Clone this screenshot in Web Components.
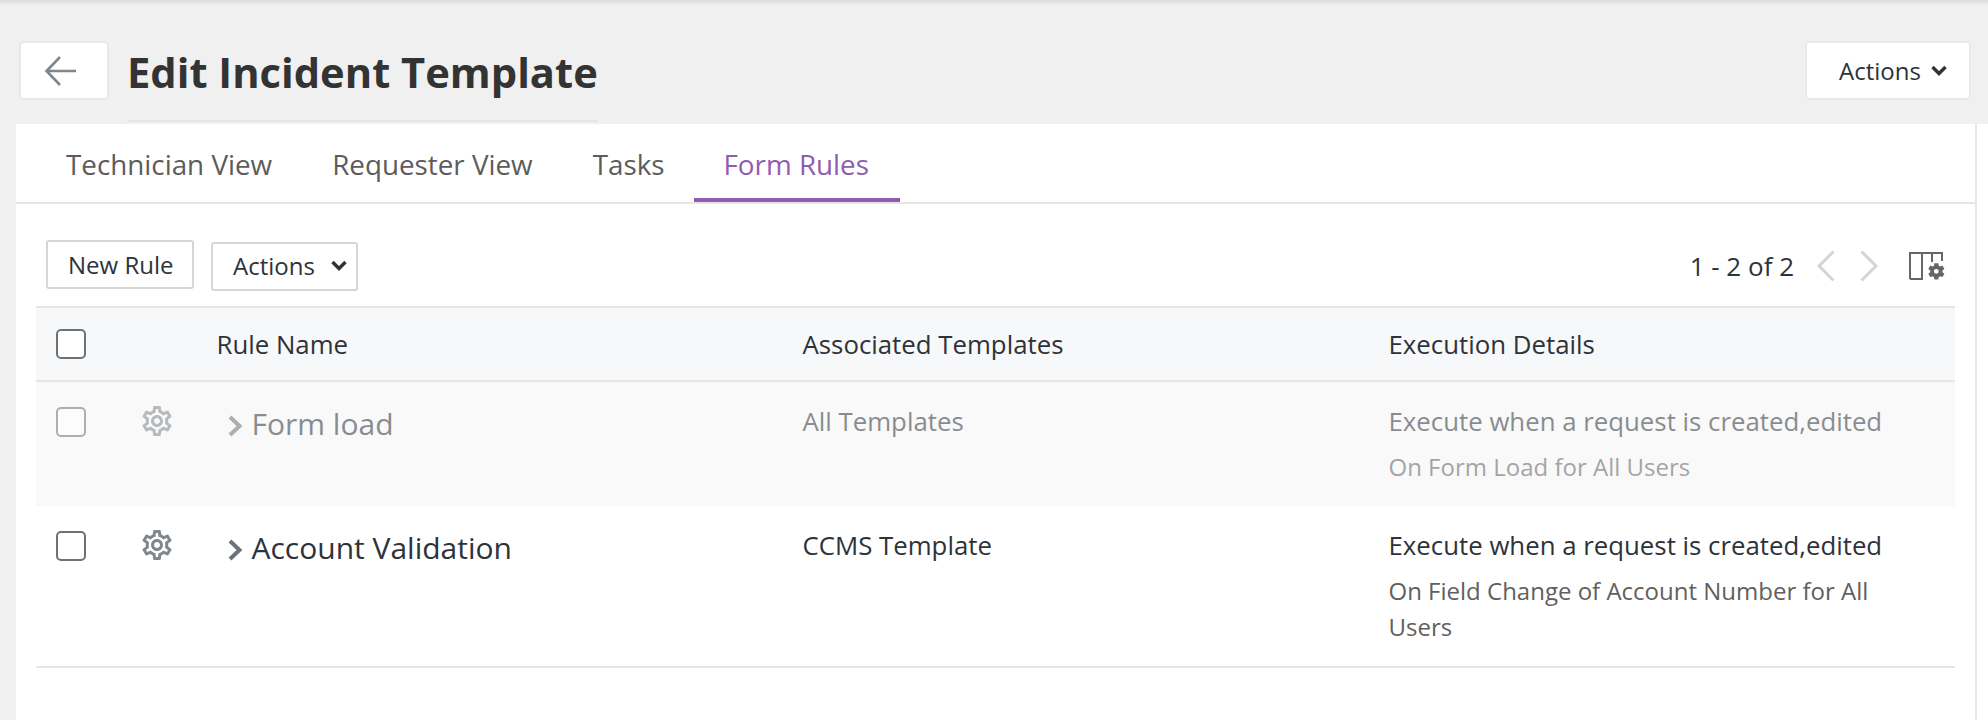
<!DOCTYPE html>
<html>
<head>
<meta charset="utf-8">
<title>Edit Incident Template</title>
<style>
  html, body { margin: 0; height: 100%; }
  body { background: #f0f0f0; font-family: "Open Sans", "Liberation Sans", sans-serif; overflow: hidden; }
</style>
</head>
<body>
<page-header title-text="Edit Incident Template"></page-header>
<page-panel>
  <tab-bar>
    <tab-item>Technician View</tab-item>
    <tab-item>Requester View</tab-item>
    <tab-item>Tasks</tab-item>
    <tab-item active>Form Rules</tab-item>
  </tab-bar>
  <rule-toolbar></rule-toolbar>
  <rule-table>
    <rule-row disabled name="Form load" templates="All Templates" when="Execute when a request is created,edited" detail="On Form Load for All Users"></rule-row>
    <rule-row name="Account Validation" templates="CCMS Template" when="Execute when a request is created,edited" detail="On Field Change of Account Number for All Users"></rule-row>
  </rule-table>
</page-panel>

<script>
const GEAR = 'M19.43 12.98c.04-.32.07-.64.07-.98 0-.34-.03-.66-.07-.98l2.11-1.65c.19-.15.24-.42.12-.64l-2-3.46c-.09-.16-.26-.25-.44-.25-.06 0-.12.01-.17.03l-2.49 1c-.52-.4-1.08-.73-1.69-.98l-.38-2.65C14.46 2.18 14.25 2 14 2h-4c-.25 0-.46.18-.49.42l-.38 2.65c-.61.25-1.17.59-1.69.98l-2.49-1c-.06-.02-.12-.03-.18-.03-.17 0-.34.09-.43.25l-2 3.46c-.13.22-.07.49.12.64l2.11 1.65c-.04.32-.07.65-.07.98 0 .33.03.66.07.98l-2.11 1.65c-.19.15-.24.42-.12.64l2 3.46c.09.16.26.25.44.25.06 0 .12-.01.17-.03l2.49-1c.52.4 1.08.73 1.69.98l.38 2.65c.03.24.24.42.49.42h4c.25 0 .46-.18.49-.42l.38-2.65c.61-.25 1.17-.59 1.69-.98l2.49 1c.06.02.12.03.18.03.17 0 .34-.09.43-.25l2-3.46c.12-.22.07-.49-.12-.64l-2.11-1.65z';
const GEAR_INNER = 'M17.45 11.27c.04.31.05.52.05.73 0 .21-.02.43-.05.73l-.14 1.13.89.7 1.08.84-.7 1.21-1.27-.51-1.04-.42-.9.68c-.43.32-.84.56-1.25.73l-1.06.43-.16 1.13-.2 1.35h-1.4l-.19-1.35-.16-1.13-1.06-.43c-.43-.18-.83-.41-1.23-.71l-.91-.7-1.06.43-1.27.51-.7-1.21 1.08-.84.89-.7-.14-1.13c-.03-.31-.05-.54-.05-.74s.02-.43.05-.73l.14-1.13-.89-.7-1.08-.84.7-1.21 1.27.51 1.04.42.9-.68c.43-.32.84-.56 1.25-.73l1.06-.43.16-1.13.2-1.35h1.39l.19 1.35.16 1.13 1.06.43c.43.18.83.41 1.23.71l.91.7 1.06-.43 1.27-.51.7 1.21-1.07.85-.89.7.14 1.13zM12 8c-2.21 0-4 1.79-4 4s1.79 4 4 4 4-1.79 4-4-1.79-4-4-4zm0 6c-1.1 0-2-.9-2-2s.9-2 2-2 2 .9 2 2-.9 2-2 2z';
const CARET = '<svg width="16" height="11" viewBox="0 0 16 11" style="flex:none"><path d="M1.500 2l6.500 6.500L14.500 2" fill="none" stroke="currentColor" stroke-width="3.400"/></svg>';

class PageHeader extends HTMLElement {
  constructor() {
    super();
    this.attachShadow({ mode: 'open' }).innerHTML = `
      <style>
        :host { display: block; height: 124px; box-sizing: border-box; background: linear-gradient(#dcdcdc, #f0f0f0 5px); padding: 41px 17px 0 19px; }
        .row { display: flex; align-items: flex-start; }
        .box { background: #fff; border: 2px solid #e9e9e9; border-radius: 5px; box-sizing: border-box; height: 59px; display: flex; align-items: center; }
        .back { width: 90px; justify-content: center; padding-right: 6px; }
        h1 { margin: 0 0 0 18px; height: 81px; box-sizing: border-box; border-bottom: 2px solid #e6e6e6; font-size: 41.700px; line-height: 48px; padding-top: 7px; font-weight: 700; color: #333; }
        .actions { margin-left: auto; width: 166px; padding-left: 32px; gap: 10px; font-size: 24px; color: #2e3338; }
      </style>
      <div class="row">
        <div class="box back">
          <svg width="34" height="32" viewBox="0 0 34 32"><path d="M32 16H3M16 2L2.500 16 16 30" fill="none" stroke="#7f878e" stroke-width="2.600"/></svg>
        </div>
        <h1>${this.getAttribute('title-text')}</h1>
        <div class="box actions">Actions ${CARET}</div>
      </div>`;
  }
}

class PagePanel extends HTMLElement {
  constructor() {
    super();
    this.attachShadow({ mode: 'open' }).innerHTML = `
      <style>
        :host { display: block; margin-left: 16px; background: #fff; height: 596px; padding-right: 11px; }
        .inner { height: 100%; border-right: 2px solid #e6e6e6; }
      </style>
      <div class="inner"><slot></slot></div>`;
  }
}

class TabBar extends HTMLElement {
  constructor() {
    super();
    this.attachShadow({ mode: 'open' }).innerHTML = `
      <style>
        :host { display: flex; height: 80px; box-sizing: border-box; padding-left: 20px; border-bottom: 2px solid #e6e6e6; }
      </style>
      <slot></slot>`;
  }
}

class TabItem extends HTMLElement {
  constructor() {
    super();
    this.attachShadow({ mode: 'open' }).innerHTML = `
      <style>
        :host { display: block; padding: 22px 30px 0; font-size: 27.800px; line-height: 36px; color: #5c5c5c; box-sizing: border-box; height: 78px; }
        :host([active]) { color: #8f5cb0; border-bottom: 4px solid #8f5cb0; margin-left: -1px; padding-right: 31px; }
      </style>
      <slot></slot>`;
  }
}

class RuleToolbar extends HTMLElement {
  constructor() {
    super();
    this.attachShadow({ mode: 'open' }).innerHTML = `
      <style>
        :host { display: flex; align-items: flex-start; height: 102px; box-sizing: border-box; padding: 36px 29px 0 30px; color: #2d3339; font-size: 26px; }
        .btn { height: 49px; box-sizing: border-box; border: 2px solid #d6d6d6; border-radius: 3px; display: flex; align-items: center; padding: 0 20px; background: #fff; font-size: 24px; white-space: nowrap; }
        .new { width: 148px; }
        .more { margin: 2px 0 0 17px; gap: 16px; width: 147px; padding-bottom: 2px; }
        .pager { margin-left: auto; display: flex; align-items: center; height: 49px; margin-top: 1px; }
        .count { margin-right: 23px; }
        .nav { margin-right: 25px; }
      </style>
      <div class="btn new">New Rule</div>
      <div class="btn more">Actions ${CARET}</div>
      <div class="pager">
        <span class="count">1 - 2 of 2</span>
        <svg class="nav" width="18" height="32" viewBox="0 0 18 32"><path d="M16.500 1.500L2 16l14.500 14.500" fill="none" stroke="#d2d4d6" stroke-width="3"/></svg>
        <svg class="nav" width="18" height="32" viewBox="0 0 18 32" style="margin-right:31px"><path d="M1.500 1.500L16 16 1.500 30.500" fill="none" stroke="#d2d4d6" stroke-width="3"/></svg>
        <svg width="37" height="30" viewBox="0 0 37 30">
          <path d="M1 28V2h32v8M1 28h12V2M23 2v9" fill="none" stroke="#666" stroke-width="2"/>
          <path transform="translate(17.500 10.500) scale(.82)" d="${GEAR}M12 9a3 3 0 1 0 0 6 3 3 0 0 0 0-6z" fill="#666" fill-rule="evenodd"/>
        </svg>
      </div>`;
  }
}

class RuleTable extends HTMLElement {
  constructor() {
    super();
    this.attachShadow({ mode: 'open' }).innerHTML = `
      <style>
        :host { display: block; margin: 0 20px; color: #2d3339; }
        .head { display: grid; grid-template-columns: 180.500px 586px 586px 1fr; height: 76px; box-sizing: border-box; align-items: center; background: #f7f8fa; border-top: 2px solid #e6e6e6; border-bottom: 2px solid #e6e6e6; font-size: 25.800px; }
        .box { width: 30px; height: 30px; box-sizing: border-box; margin-left: 20px; border: 2px solid #6f7275; border-radius: 5px; background: #fff; }
      </style>
      <div class="head">
        <div><div class="box"></div></div>
        <div>Rule Name</div>
        <div>Associated Templates</div>
        <div>Execution Details</div>
      </div>
      <slot></slot>`;
  }
}

class RuleRow extends HTMLElement {
  constructor() {
    super();
    const a = (n) => this.getAttribute(n);
    this.attachShadow({ mode: 'open' }).innerHTML = `
      <style>
        :host { display: grid; grid-template-columns: 106px 74.500px 586px 586px 1fr; align-items: start; padding: 25px 0 21px; min-height: 124px; box-sizing: border-box; border-bottom: 2px solid #e6e6e6; }
        :host([disabled]) { background: #f9f9f9; border-bottom: 0; }
        :host([disabled]) .cell { opacity: .55; }
        .box { width: 30px; height: 30px; box-sizing: border-box; margin-left: 20px; border: 2px solid #6f7275; border-radius: 5px; background: #fff; }
        .gear { display: block; margin-top: -1px; }
        .name { display: flex; align-items: center; font-size: 30px; line-height: 40px; margin-top: -3px; padding-left: 11px; }
        .name svg { margin: 4px 9px 0 0; flex: none; }
        .text, .when { font-size: 25.800px; line-height: 36px; margin-top: -4px; }
        .detail { font-size: 24px; line-height: 36px; color: #5f5f5f; margin-top: 10px; padding-right: 40px; }
      </style>
      <div class="cell"><div class="box"></div></div>
      <div class="cell">
        <svg class="gear" width="30" height="30" viewBox="2 2 20 20"><path d="${GEAR}${GEAR_INNER}" fill="#80888e" fill-rule="evenodd"/></svg>
      </div>
      <div class="cell name">
        <svg width="15" height="22" viewBox="0 0 15 22"><path d="M2 2l9.500 9L2 20" fill="none" stroke="#6d7379" stroke-width="4"/></svg>
        <span>${a('name')}</span>
      </div>
      <div class="cell text">${a('templates')}</div>
      <div class="cell">
        <div class="when">${a('when')}</div>
        <div class="detail">${a('detail')}</div>
      </div>`;
  }
}

customElements.define('page-header', PageHeader);
customElements.define('page-panel', PagePanel);
customElements.define('tab-bar', TabBar);
customElements.define('tab-item', TabItem);
customElements.define('rule-toolbar', RuleToolbar);
customElements.define('rule-table', RuleTable);
customElements.define('rule-row', RuleRow);
</script>
</body>
</html>
